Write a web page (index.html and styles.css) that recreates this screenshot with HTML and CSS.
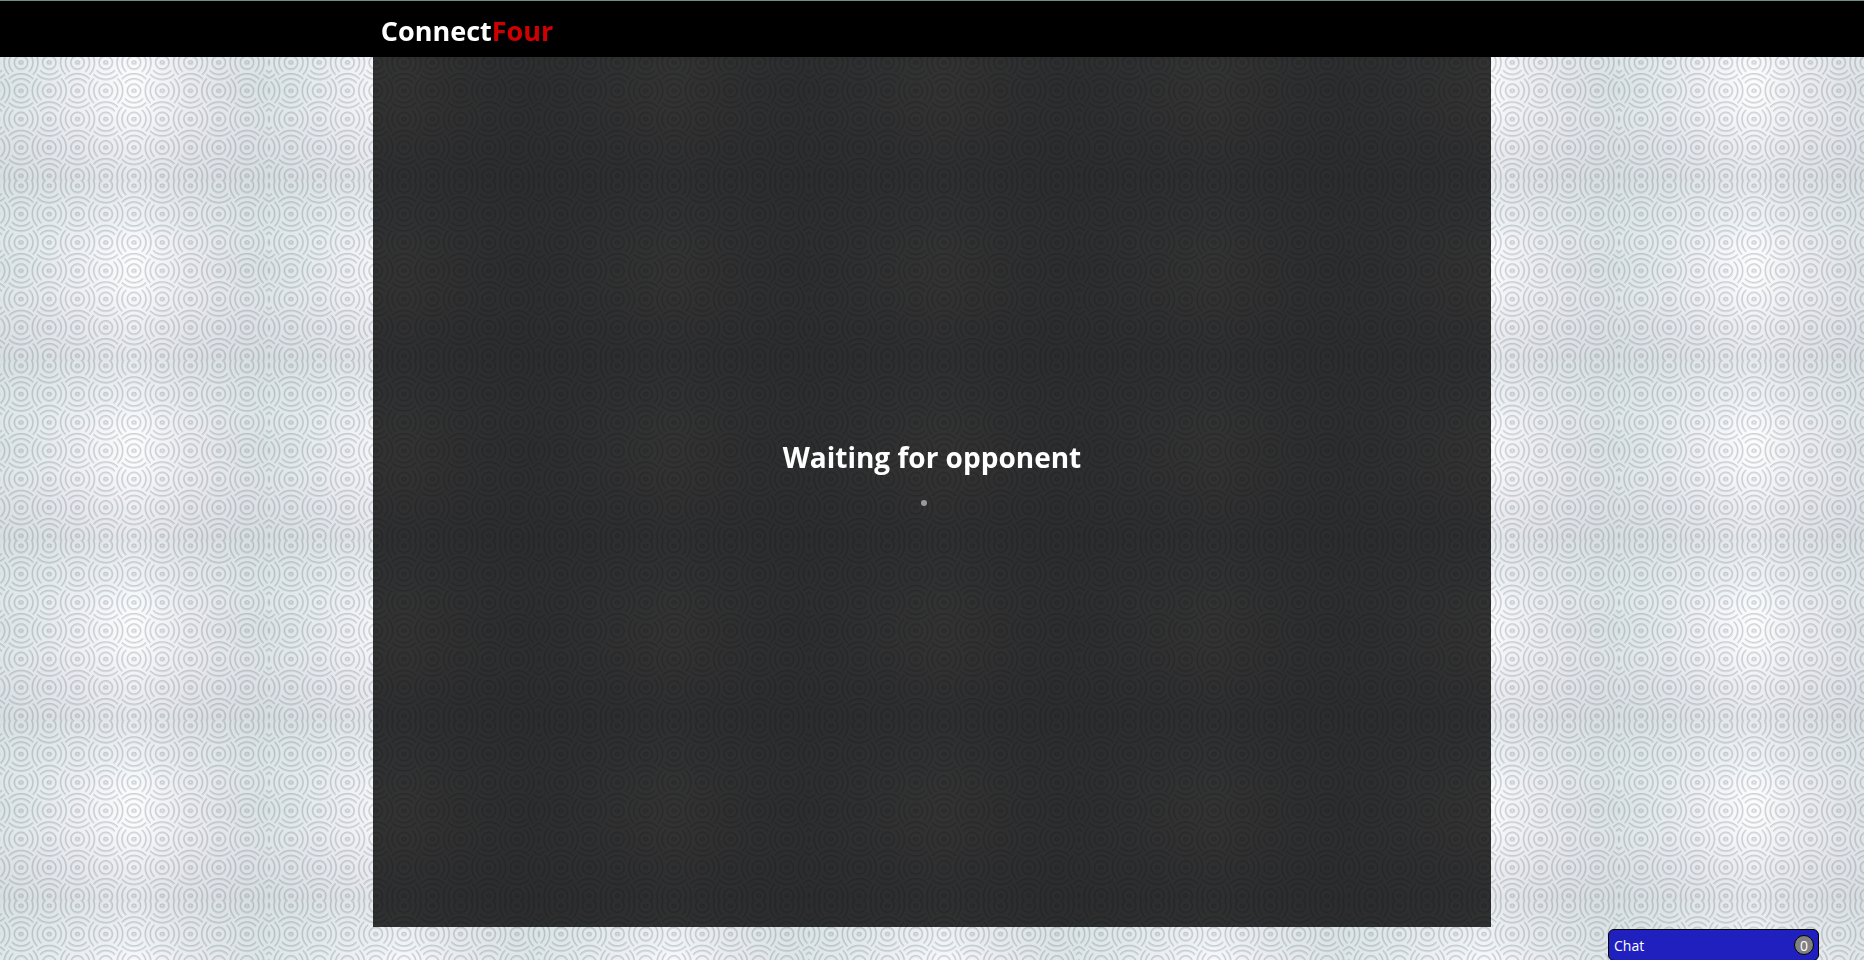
FILE: index.html
```html
<!DOCTYPE html>
<html lang="en">
<head>
<meta charset="utf-8">
<title>ConnectFour</title>
<link rel="stylesheet" href="styles.css">
</head>
<body>
<svg class="backdrop" aria-hidden="true">
  <defs>
    <linearGradient id="sheen">
      <stop offset="0" stop-color="#d8e2e4"/>
      <stop offset=".15" stop-color="#e1e8eb"/>
      <stop offset=".3" stop-color="#eeeff4"/>
      <stop offset=".5" stop-color="#fdfdff"/>
      <stop offset=".68" stop-color="#ebebf0"/>
      <stop offset=".88" stop-color="#dce1e5"/>
      <stop offset="1" stop-color="#d6e0e2"/>
    </linearGradient>
    <linearGradient id="fade" x2="0" y2="1">
      <stop offset="0" stop-color="#d8dfe3" stop-opacity=".6"/>
      <stop offset=".25" stop-color="#e2ebef" stop-opacity=".45"/>
      <stop offset=".47" stop-color="#ffffff" stop-opacity=".05"/>
      <stop offset=".75" stop-color="#e4e4ec" stop-opacity=".45"/>
      <stop offset="1" stop-color="#d6dbe0" stop-opacity=".6"/>
    </linearGradient>
    <g id="v">
      <ellipse rx="2" ry="1.5"/>
      <circle r="6.7"/>
      <path d="M-9.2-7.7A12 12 0 0 1 9.2-7.7M-9.2 7.7A12 12 0 0 0 9.2 7.7M-12.2-11.8A17 17 0 0 1 12.2-11.8M-12.2 11.8A17 17 0 0 0 12.2 11.8"/>
    </g>
    <g id="h">
      <ellipse rx="2" ry="1.5"/>
      <circle r="6.7"/>
      <path d="M-7.7-9.2A12 12 0 0 0-7.7 9.2M7.7-9.2A12 12 0 0 1 7.7 9.2M-11.8-12.2A17 17 0 0 0-11.8 12.2M11.8-12.2A17 17 0 0 1 11.8 12.2"/>
    </g>
    <g id="pair"><use href="#h"/><use href="#v" x="28.25"/></g>
    <g id="even">
      <use href="#v" x="-6.25"/><use href="#pair" x="22"/><use href="#pair" x="78.5"/><use href="#pair" x="135"/><use href="#pair" x="191.5"/><use href="#pair" x="248"/>
    </g>
    <g id="odd">
      <use href="#pair" x="-6.25"/><use href="#pair" x="50.25"/><use href="#pair" x="106.75"/><use href="#pair" x="163.25"/><use href="#pair" x="219.75"/><use href="#h" x="276.25"/>
    </g>
    <g id="rings">
      <use href="#odd" y="-23.3"/><use href="#even" y="5"/><use href="#odd" y="33.3"/><use href="#even" y="61.7"/><use href="#odd" y="90"/><use href="#even" y="118.3"/><use href="#odd" y="146.7"/><use href="#even" y="175"/><use href="#odd" y="203.3"/>
    </g>
    <pattern id="tile" x="-1" y="1" width="270" height="180" patternUnits="userSpaceOnUse">
      <rect width="270" height="180" fill="url(#sheen)"/>
      <rect width="270" height="180" fill="url(#fade)"/>
      <use class="groove" href="#rings"/>
      <use class="groove-edge" href="#rings" y="-.7"/>
    </pattern>
  </defs>
  <rect width="100%" height="100%" fill="url(#tile)"/>
</svg>

<header class="topbar">
  <h1 class="logo">Connect<span class="logo-accent">Four</span></h1>
</header>

<main class="game">
  <h2 class="status">Waiting for opponent</h2>
  <div class="loader" role="status" aria-label="Loading">
    <span class="dot dot-on"></span><span class="dot"></span><span class="dot"></span>
  </div>
</main>

<button class="chat" type="button">
  <span>Chat</span>
  <span class="badge">0</span>
</button>
</body>
</html>
```
FILE: styles.css
```css
* {
  box-sizing: border-box;
}

body {
  margin: 0;
  min-height: 100vh;
  overflow: hidden;
  color: #fff;
  font-family: "Open Sans", "Noto Sans", sans-serif;
}

.backdrop {
  position: fixed;
  inset: 0;
  z-index: -1;
  width: 100%;
  height: 100%;
}

.groove,
.groove-edge {
  fill: none;
  stroke: #46555f;
}

.groove {
  stroke-width: 2;
  stroke-opacity: 0.15;
}

.groove-edge {
  stroke-width: 1;
  stroke-opacity: 0.12;
}

.topbar {
  padding: 10px 20% 6px;
  border-top: 1px solid #6f8c88;
  background: #000;
}

.logo,
.status {
  margin: 0;
  font-weight: 700;
  line-height: 40px;
}

.logo {
  padding-left: 8px;
  font-size: 27px;
}

.status {
  font-size: 28px;
}

.logo-accent {
  color: #d00000;
}

.game {
  display: flex;
  flex-direction: column;
  align-items: center;
  justify-content: center;
  gap: 23px;
  width: 60%;
  min-height: calc(100vh - 90px);
  margin: 0 auto;
  padding-bottom: 42px;
  background: rgba(0, 0, 0, 0.8);
}

.loader {
  display: flex;
  gap: 2px;
}

.dot {
  width: 6px;
  height: 6px;
  border-radius: 50%;
  background: #999;
  visibility: hidden;
}

.dot-on {
  visibility: visible;
}

.chat {
  position: fixed;
  right: 45px;
  bottom: -1px;
  display: flex;
  align-items: center;
  justify-content: space-between;
  width: 211px;
  height: 32px;
  padding: 0 4px 0 5px;
  border: 1px solid #000;
  border-radius: 6px;
  background: #2020bf;
  color: #fff;
  font-family: inherit;
  font-size: 14px;
}

.badge {
  width: 20px;
  height: 20px;
  border: 1px solid #000;
  border-radius: 50%;
  background: #808080;
  line-height: 20px;
  text-align: center;
}
```
